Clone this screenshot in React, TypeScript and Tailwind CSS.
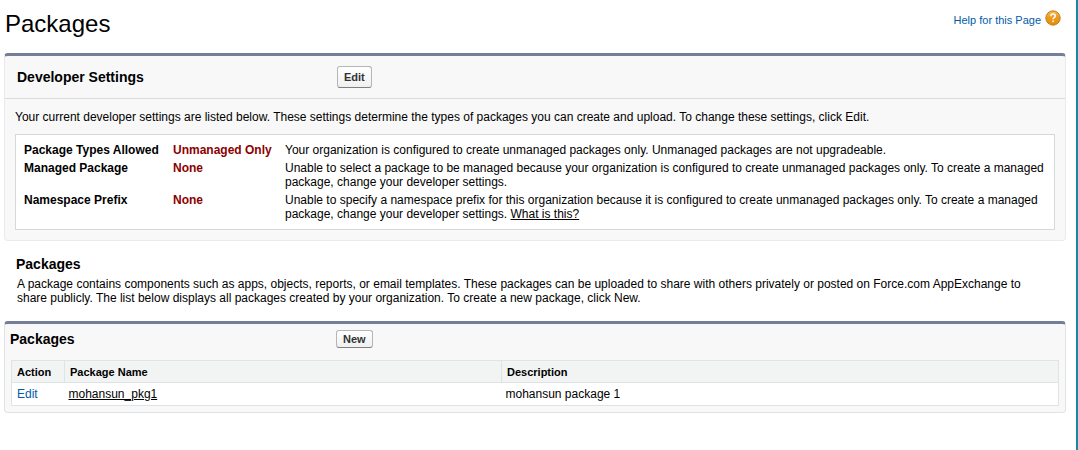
import type { ReactNode } from "react";

type Setting = { name: string; value: string; description: ReactNode };

const settings: Setting[] = [
  {
    name: "Package Types Allowed",
    value: "Unmanaged Only",
    description:
      "Your organization is configured to create unmanaged packages only. Unmanaged packages are not upgradeable.",
  },
  {
    name: "Managed Package",
    value: "None",
    description:
      "Unable to select a package to be managed because your organization is configured to create unmanaged packages only. To create a managed package, change your developer settings.",
  },
  {
    name: "Namespace Prefix",
    value: "None",
    description: (
      <>
        Unable to specify a namespace prefix for this organization because it is configured to create unmanaged
        packages only. To create a managed package, change your developer settings.{" "}
        <a href="#namespace" className="inline-block underline">
          What is this?
        </a>
      </>
    ),
  },
];

const packages = [{ name: "mohansun_pkg1", description: "mohansun package 1" }];

function HelpIcon() {
  return (
    <svg width="16" height="16" viewBox="0 0 16 16" aria-hidden="true">
      <defs>
        <linearGradient id="help-fill" x1="0" y1="0" x2="0" y2="1">
          <stop offset="0" stopColor="#f6bd55" />
          <stop offset="0.45" stopColor="#ed9a1c" />
          <stop offset="1" stopColor="#e58c08" />
        </linearGradient>
      </defs>
      <circle cx="8" cy="8" r="7.2" fill="url(#help-fill)" stroke="#b97818" strokeWidth="0.9" />
      <path
        d="M5.8 6.3C5.8 4.9 6.7 4.1 8 4.1s2.3.8 2.3 2c0 1.6-2.2 1.6-2.2 3.2"
        fill="none"
        stroke="#fff"
        strokeWidth="1.5"
      />
      <rect x="7.3" y="10.5" width="1.6" height="1.6" fill="#fff" />
    </svg>
  );
}

function PanelButton({ tall, children }: { tall?: boolean; children: ReactNode }) {
  return (
    <button
      type="button"
      className={`${
        tall ? "h-[22px]" : "h-[18px]"
      } rounded-[3px] border border-[#b5b5b5] border-b-[#7f7f7f] bg-linear-to-b from-white to-[#f0f0f0] px-1.5 text-[11px] leading-none font-bold text-[#333]`}
    >
      {children}
    </button>
  );
}

export default function App() {
  return (
    <div className="min-h-screen border-r-2 border-[#1a87a8] bg-white pr-2.5 pl-1 font-['Liberation_Sans',Arial,sans-serif] text-xs leading-[14px] text-black">
      <header className="flex h-[53px] items-start justify-between pt-2.5 pr-[5px]">
        <h1 className="pl-px text-2xl leading-7">Packages</h1>
        <a href="#help" className="flex items-start gap-1 text-[11px] text-[#015ba7]">
          <span className="pt-[3px]">Help for this Page</span>
          <HelpIcon />
        </a>
      </header>

      <main>
        <section className="rounded-[4px] border border-t-[3px] border-[#eaeaea] border-t-[#747e96] bg-[#f8f8f8] pb-2.5">
          <div className="flex h-[43px] items-center border-b border-[#dbdbdb]">
            <h2 className="w-[332px] shrink-0 pl-3 text-sm font-bold">Developer Settings</h2>
            <PanelButton tall>Edit</PanelButton>
          </div>
          <div className="px-2.5 pt-[11px]">
            <p>
              Your current developer settings are listed below. These settings determine the types of packages you can
              create and upload. To change these settings, click Edit.
            </p>
            <div className="mt-2.5 border border-[#d4dadc] bg-white p-1.5">
              <table className="w-full text-left">
                <tbody>
                  {settings.map((setting) => (
                    <tr key={setting.name} className="align-top">
                      <th scope="row" className="w-[149px] p-0.5">
                        {setting.name}
                      </th>
                      <td className="w-28 p-0.5 font-bold text-[#8b0000]">{setting.value}</td>
                      <td className="p-0.5">{setting.description}</td>
                    </tr>
                  ))}
                </tbody>
              </table>
            </div>
          </div>
        </section>

        <section className="px-3 py-4">
          <h2 className="text-sm leading-[14px] font-bold">Packages</h2>
          <p className="mt-1.5 pl-px">
            A package contains components such as apps, objects, reports, or email templates. These packages can be
            uploaded to share with others privately or posted on Force.com AppExchange to share publicly. The list
            below displays all packages created by your organization. To create a new package, click New.
          </p>
        </section>

        <section className="rounded-[4px] border border-t-[3px] border-[#e0e3e5] border-t-[#747e96] bg-[#f8f8f8] px-1.5 pb-1.5">
          <div className="flex h-9 items-center pb-1.5">
            <h2 className="-ml-px w-[326px] shrink-0 text-sm font-bold">Packages</h2>
            <PanelButton>New</PanelButton>
          </div>
          <table className="w-full border-collapse border border-[#e0e3e5] bg-white text-left">
            <thead>
              <tr className="h-[22px] border-b border-[#e0e3e5] bg-[#f2f3f3] text-[11px]">
                <th scope="col" className="w-[53px] px-[5px]">
                  Action
                </th>
                <th scope="col" className="w-[437px] border-l border-[#e0e3e5] px-[5px]">
                  Package Name
                </th>
                <th scope="col" className="border-l border-[#e0e3e5] px-[5px]">
                  Description
                </th>
              </tr>
            </thead>
            <tbody>
              {packages.map((item) => (
                <tr key={item.name} className="h-[23px]">
                  <td className="px-[5px]">
                    <a href="#edit" className="text-[#015ba7]">
                      Edit
                    </a>
                  </td>
                  <td className="px-1">
                    <a href="#package" className="underline">
                      {item.name}
                    </a>
                  </td>
                  <td className="px-1">{item.description}</td>
                </tr>
              ))}
            </tbody>
          </table>
        </section>
      </main>
    </div>
  );
}
